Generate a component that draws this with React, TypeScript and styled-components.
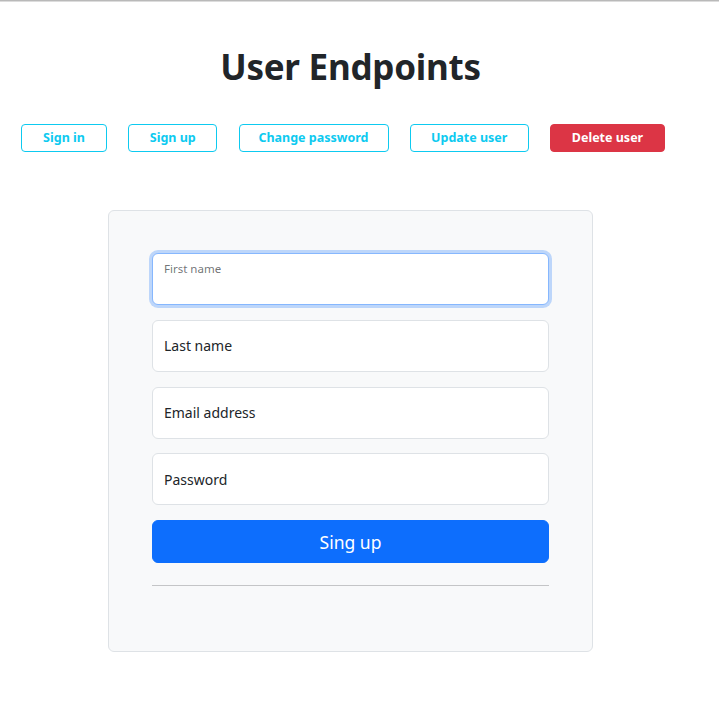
import React from "react";
import styled, { createGlobalStyle, css } from "styled-components";

const Global = createGlobalStyle`
  html, body { margin: 0; padding: 0; background: #fff; }
  body {
    font-family: "Noto Sans", "Open Sans", sans-serif;
    color: #212529;
    border-top: 1px solid #b9b9b9;
    box-shadow: inset 0 1px 0 #dcdcdc;
  }
`;

const Page = styled.div`
  width: 701px;
  display: flex;
  flex-direction: column;
  align-items: center;
`;

const Title = styled.h1`
  margin: 44px 0 0;
  font-size: 35px;
  line-height: 44px;
  font-weight: 700;
  letter-spacing: -0.25px;
  color: #212529;
`;

const Toolbar = styled.div`
  align-self: stretch;
  display: flex;
  gap: 21.25px;
  padding: 0 21px;
  margin-top: 35px;
`;

const ToolButton = styled.button<{ $danger?: boolean; $w: number }>`
  box-sizing: border-box;
  height: 28px;
  width: ${(p) => p.$w}px;
  border-radius: 4px;
  font-family: inherit;
  font-size: 12.5px;
  font-weight: 700;
  line-height: 24px;
  padding: 0 0 1px;
  cursor: pointer;
  ${(p) =>
    p.$danger
      ? css`
          background: #dc3545;
          border: 1px solid #dc3545;
          color: #fff;
        `
      : css`
          background: #fff;
          border: 1px solid #0dcaf0;
          color: #0dcaf0;
        `}
`;

const Card = styled.div`
  box-sizing: border-box;
  width: 485px;
  margin-top: 58px;
  padding: 42px 43px 0 43px;
  height: 442px;
  background: #f8f9fa;
  border: 1px solid #dee2e6;
  border-radius: 6px;
  display: flex;
  flex-direction: column;
`;

const Field = styled.div<{ $focused?: boolean }>`
  box-sizing: border-box;
  height: 52px;
  background: #fff;
  border: 1px solid #dee2e6;
  border-radius: 6px;
  padding: 0 11px;
  display: flex;
  align-items: center;
  font-size: 14px;
  color: #212529;
  margin-bottom: 14.75px;
  ${(p) =>
    p.$focused &&
    css`
      border-color: #86b7fe;
      box-shadow: 0 0 0 3px rgba(13, 110, 253, 0.25);
      align-items: flex-start;
      padding-top: 7px;
      font-size: 11.5px;
      color: rgba(33, 37, 41, 0.65);
    `}
`;

const SubmitButton = styled.button`
  box-sizing: border-box;
  height: 43px;
  width: 100%;
  background: #0d6efd;
  border: 1px solid #0d6efd;
  border-radius: 6px;
  color: #fff;
  font-family: inherit;
  font-size: 17.5px;
  cursor: pointer;
`;

const Divider = styled.hr`
  margin: 22px 0 0;
  border: 0;
  border-top: 1px solid #c4c5c7;
`;

export default function App() {
  return (
    <>
      <Global />
      <Page>
        <Title>User Endpoints</Title>
        <Toolbar>
          <ToolButton $w={86}>Sign in</ToolButton>
          <ToolButton $w={89}>Sign up</ToolButton>
          <ToolButton $w={150}>Change password</ToolButton>
          <ToolButton $w={119}>Update user</ToolButton>
          <ToolButton $w={115} $danger>
            Delete user
          </ToolButton>
        </Toolbar>
        <Card>
          <Field $focused>First name</Field>
          <Field>Last name</Field>
          <Field>Email address</Field>
          <Field>Password</Field>
          <SubmitButton>Sing up</SubmitButton>
          <Divider />
        </Card>
      </Page>
    </>
  );
}
